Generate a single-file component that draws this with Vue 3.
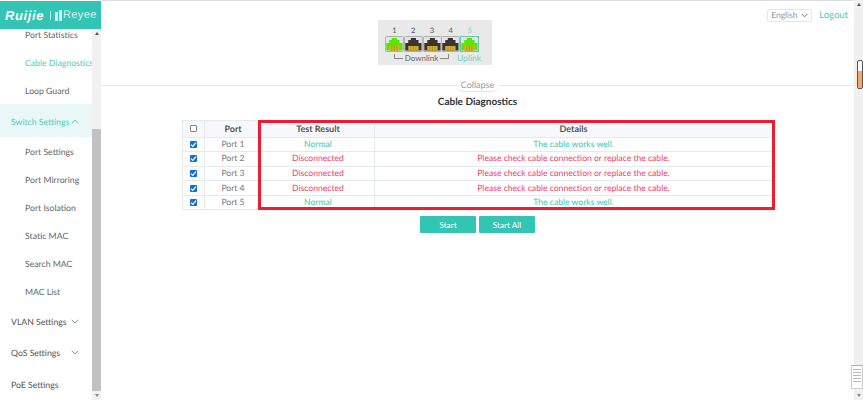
<template>
  <div class="page">
    <aside class="side">
      <div class="brand">
        <span class="ruijie">Ruijie</span>
        <span class="sep"></span>
        <svg class="bars" width="7" height="11" viewBox="0 0 7 11"><path d="M0 2h3v9H0zM4 0h3v11H4z" fill="#cdeee8"/></svg>
        <span class="reyee">Reyee</span>
      </div>
      <div class="menu-wrap">
        <nav class="menu">
          <a v-for="m in menu" :key="m.label" class="item" :class="[m.cls, { child: m.child }]">
            <span>{{ m.label }}</span>
            <svg v-if="m.arrow" class="chev" width="8" height="5" viewBox="0 0 8 5"><path :d="m.arrow === 'up' ? 'M.7 4.2 4 1l3.3 3.2' : 'M.7 .8 4 4l3.3-3.2'" fill="none" stroke="currentColor" stroke-width=".9"/></svg>
          </a>
        </nav>
        <div class="side-scroll">
          <i class="tri tri-up"></i>
          <div class="side-thumb"></div>
          <i class="tri tri-down"></i>
        </div>
      </div>
    </aside>
    <main class="main">
      <div class="topline"></div>
      <div class="lang-row">
        <div class="lang"><span>English</span><svg width="7" height="5" viewBox="0 0 7 5"><path d="M.6 .8 3.5 3.8 6.4 .8" fill="none" stroke="#777" stroke-width="1"/></svg></div>
        <a class="logout">Logout</a>
      </div>
      <div class="panel-row">
        <div class="panel">
          <div class="nums"><span v-for="n in 4" :key="n">{{ n }}</span><span class="five">5</span></div>
          <div class="ports">
            <svg v-for="(c, i) in portColors" :key="i" class="port" :class="{ uplinked: i === 4 }" viewBox="0 0 22 16" preserveAspectRatio="none">
              <rect x=".5" y=".5" width="21" height="15" rx="1" fill="#e4e4e4" stroke="#aaa"/>
              <path d="M1.5 14.5V7h3.5V4h3V2h6v2h3v3h3.5v7.5z" :fill="c"/>
              <rect x="5" y="10" width="12" height="4.5" fill="#d9b21c"/>
              <path d="M8 10v5M11 10v5M14 10v5" stroke="#8d7a18" stroke-width=".6"/>
            </svg>
          </div>
          <div class="labels">
            <div class="downlink"><i class="tick"></i><span>Downlink</span><i class="tick"></i></div>
            <span class="uplink">Uplink</span>
          </div>
        </div>
      </div>
      <div class="collapse-row"><span class="collapse">Collapse</span></div>
      <h1>Cable Diagnostics</h1>
      <div class="table-wrap">
        <table>
          <thead>
            <tr>
              <th class="c0"><span class="box"></span></th>
              <th class="c1">Port</th>
              <th class="c2">Test Result</th>
              <th class="c3">Details</th>
            </tr>
          </thead>
          <tbody>
            <tr v-for="r in rows" :key="r.port">
              <td class="c0"><span class="check"><svg width="7" height="7" viewBox="0 0 7 7"><path d="M1 3.6 2.8 5.4 6 1.6" fill="none" stroke="#fff" stroke-width="1.3"/></svg></span></td>
              <td class="c1 muted">{{ r.port }}</td>
              <td class="c2" :class="r.ok ? 'ok' : 'bad'">{{ r.ok ? 'Normal' : 'Disconnected' }}</td>
              <td class="c3" :class="r.ok ? 'ok' : 'bad'">{{ r.ok ? 'The cable works well.' : 'Please check cable connection or replace the cable.' }}</td>
            </tr>
          </tbody>
        </table>
        <div class="highlight"></div>
      </div>
      <div class="actions">
        <button>Start</button>
        <button class="all">Start All</button>
      </div>
      <div class="page-scroll">
        <i class="tri tri-up"></i>
        <div class="page-thumb"><b></b></div>
        <i class="tri tri-down"></i>
      </div>
      <div class="recaptcha">
        <i></i><i></i><i></i><i></i><i></i>
      </div>
    </main>
  </div>
</template>

<script setup>
const menu = [
  { label: 'Port Statistics', child: true },
  { label: 'Cable Diagnostics', child: true, cls: 'active' },
  { label: 'Loop Guard', child: true },
  { label: 'Switch Settings', cls: 'open', arrow: 'up' },
  { label: 'Port Settings', child: true },
  { label: 'Port Mirroring', child: true },
  { label: 'Port Isolation', child: true },
  { label: 'Static MAC', child: true },
  { label: 'Search MAC', child: true },
  { label: 'MAC List', child: true },
  { label: 'VLAN Settings', arrow: 'down', cls: 'group' },
  { label: 'QoS Settings', arrow: 'down', cls: 'group' },
  { label: 'PoE Settings', cls: 'group' }
]
const portColors = ['#55e800', '#3a3530', '#3a3530', '#3a3530', '#55e800']
const rows = [
  { port: 'Port 1', ok: true },
  { port: 'Port 2', ok: false },
  { port: 'Port 3', ok: false },
  { port: 'Port 4', ok: false },
  { port: 'Port 5', ok: true }
]
</script>

<style>
html, body { margin: 0; background: #fff; overflow: hidden; }
</style>

<style scoped>
.page {
  display: flex;
  width: 863px;
  height: 400px;
  overflow: hidden;
  font-family: Lato, "Noto Sans", sans-serif;
  font-size: 8.6px;
  text-rendering: geometricPrecision;
  color: #666;
  background: #fff;
}
.side { width: 101px; flex: none; display: flex; flex-direction: column; height: 400px; }
.brand {
  height: 28px;
  margin-top: 1px;
  flex: none;
  background: #33c5b4;
  display: flex;
  align-items: center;
  padding-left: 5px;
  color: #fff;
  box-sizing: border-box;
}
.ruijie { font: italic 700 13px "Liberation Sans", sans-serif; width: 40px; letter-spacing: .6px; }
.sep { width: 1px; height: 9px; background: #bfeee7; margin: 0 4px 0 5px; }
.bars { margin-right: 1px; }
.reyee { font: 400 11px "Liberation Sans", sans-serif; letter-spacing: .4px; color: #d9f5f0; }
.menu-wrap { flex: 1; display: flex; min-height: 0; overflow: hidden; }
.menu { width: 92px; flex: none; overflow: hidden; margin-top: -9px; font-size: 8.7px; }
.item {
  display: flex;
  align-items: center;
  height: 28px;
  padding: 0 13px 0 11px;
  white-space: nowrap;
  color: #555;
  box-sizing: border-box;
}
.item.child { padding-left: 25px; padding-right: 0; color: #666; }
.item.child.active { color: #4ecbbd; }
.item.open { background: #e9f8f6; color: #4ecbbd; height: 33px; padding-top: 2px; }
.item.group { height: 31.5px; padding-top: 1px; }
.chev { margin-left: auto; flex: none; }
.item.group .chev { color: #888; }
.side-scroll {
  width: 9px;
  background: #f1f1f1;
  display: flex;
  flex-direction: column;
  align-items: center;
  position: relative;
}
.side-thumb { position: absolute; top: 100px; bottom: 9px; left: 0; width: 9px; background: #c1c1c1; }
.tri { width: 0; height: 0; border-left: 2.5px solid transparent; border-right: 2.5px solid transparent; display: block; }
.tri-up { border-bottom: 3px solid #555; margin-top: 3px; }
.tri-down { border-top: 3px solid #888; margin-top: auto; margin-bottom: 3px; }
.main { flex: 1; position: relative; min-width: 0; }
.topline { height: 1px; background: #dedede; }
.lang-row {
  display: flex;
  justify-content: flex-end;
  align-items: center;
  gap: 7px;
  height: 14px;
  margin-top: 7px;
  padding-right: 15px;
}
.lang {
  width: 45px;
  height: 13px;
  border: 1px solid #e2e5f0;
  border-radius: 2px;
  box-sizing: border-box;
  display: flex;
  align-items: center;
  justify-content: space-between;
  padding: 0 3px;
  color: #999;
  font-size: 8.5px;
}
.logout { color: #4ecbbd; font-size: 9.5px; }
.panel-row { height: 56px; margin-top: -2px; display: flex; padding-left: 277px; }
.panel {
  width: 114px;
  height: 45px;
  background: #e9e9e9;
  box-sizing: border-box;
  padding: 6px 0 0 7px;
}
.nums { display: flex; width: 100px; font-size: 7.5px; line-height: 10px; color: #555; }
.nums span { width: 18.8px; text-align: center; }
.nums .five { color: #6bd4c8; }
.ports { display: flex; }
.port { width: 18.8px; height: 16px; display: block; flex: none; }
.port.uplinked { outline: 1px dashed #4ecbbd; outline-offset: -1px; }
.labels { display: flex; align-items: center; font-size: 8px; line-height: 10px; margin-top: 1px; }
.downlink { display: flex; align-items: center; color: #666; margin-left: 9px; width: 55px; gap: 2px; }
.tick { flex: 1; height: 4px; border-bottom: 1px solid #888; margin-top: -3px; }
.tick:first-child { border-left: 1px solid #888; }
.tick:last-child { border-right: 1px solid #888; }
.uplink { color: #6bd4c8; margin-left: 8px; font-size: 8.5px; }
.collapse-row {
  margin-top: 9px;
  border-top: 1px solid #e6e6e6;
  height: 0;
  display: flex;
  justify-content: center;
  margin-right: 9px;
}
.collapse {
  height: 12px;
  line-height: 10px;
  margin-top: -6px;
  padding: 0 5px;
  background: #fff;
  color: #999;
  font-size: 9px;
  border-radius: 0 0 8px 8px;
  border-bottom: 1px solid #e6e6e6;
  box-sizing: border-box;
}
h1 {
  margin: 9px 0 0;
  padding-right: 9px;
  text-align: center;
  font-size: 10px;
  line-height: 14px;
  font-weight: 700;
  color: #333;
}
.table-wrap { position: relative; margin: 11px 0 0 81px; width: 593px; }
table {
  border-collapse: collapse;
  table-layout: fixed;
  width: 593px;
  text-align: center;
}
th, td { border: 1px solid #e6e9f2; padding: 0; line-height: 13px; }
th { height: 15.5px; background: #f7f8fb; color: #555; font-weight: 700; font-size: 9px; }
td { height: 13.6px; }
.c0 { width: 21px; }
td.c1, th.c1 { padding-left: 3px; width: 50px; }
td.c2, th.c2 { padding-left: 3px; width: 112px; }
.c3 { padding-right: 2px; }
.muted { color: #777; }
.ok { color: #3cc7b6; }
.bad { color: #ee3f6c; }
.box, .check { display: block; width: 7px; height: 7px; margin: 0 auto; box-sizing: border-box; }
.box { border: 1px solid #888; border-radius: 1px; background: #fff; }
.check { background: #0f6fe0; border-radius: 1px; display: flex; }
.highlight {
  position: absolute;
  left: 76px;
  top: 0;
  right: 0;
  bottom: 0;
  border: 3px solid #ee1c2e;
  box-sizing: border-box;
}
.actions { display: flex; gap: 3px; margin: 6px 0 0 319px; }
button {
  width: 56px;
  height: 16.5px;
  border: 0;
  padding: 0;
  border-radius: 1px;
  background: #33c5b4;
  color: #fff;
  font: inherit;
  font-size: 8.2px;
}
.page-scroll {
  position: absolute;
  right: 0;
  top: 0;
  bottom: 0;
  width: 9px;
  background: #f0f0f0;
  display: flex;
  flex-direction: column;
  align-items: center;
}
.page-thumb {
  position: absolute;
  top: 60px;
  left: 3px;
  width: 6px;
  height: 29px;
  border: 1px solid #555;
  border-radius: 2px;
  box-sizing: border-box;
  background: #f7f7f7;
  display: flex;
  align-items: flex-end;
}
.page-thumb b { display: block; width: 100%; height: 17px; background: #f5a765; }
.recaptcha {
  position: absolute;
  right: 0;
  top: 365px;
  width: 12px;
  height: 24px;
  background: #fff;
  border: 1px solid #ccc;
  border-top-color: #e8a25f;
  box-sizing: border-box;
  padding: 3px 1px;
  display: flex;
  flex-direction: column;
  gap: 2px;
}
.recaptcha i { display: block; height: 1px; background: #bbb; }
</style>
